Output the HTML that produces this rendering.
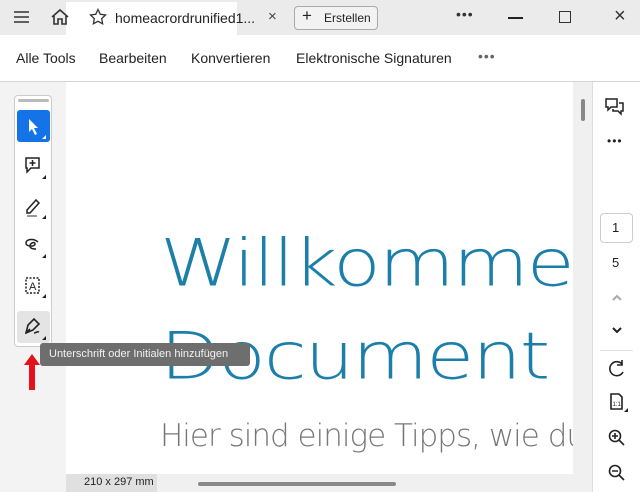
<!DOCTYPE html>
<html><head><meta charset="utf-8"><style>
*{margin:0;padding:0;box-sizing:border-box}
body{width:640px;height:492px;overflow:hidden;position:relative;background:#f3f3f3;font-family:"Liberation Sans",sans-serif;color:#222}
.abs{position:absolute}
.titlebar{left:0;top:0;width:640px;height:35px;background:#ebebeb}
.tab{left:66px;top:2px;width:171px;height:33px;background:#fff}
.toolbar{left:0;top:35px;width:640px;height:47px;background:#fff;border-bottom:1px solid #d4d4d4}
.toolbar span{position:absolute;top:15px;font-size:14px;color:#222}
.page{left:66px;top:82px;width:507px;height:392px;background:#fff;overflow:hidden}
.big{position:absolute;left:94px;font-family:"DejaVu Sans","Liberation Sans",sans-serif;font-weight:200;color:#1b7fa9;font-size:82px;line-height:1;white-space:nowrap;letter-spacing:-2px;transform:scale(0.95,0.79);transform-origin:left top}
.right{left:592px;top:82px;width:48px;height:410px;background:#fff;border-left:1px solid #ddd}
</style></head><body>
<div class="abs titlebar"></div>
<div class="abs tab"></div>
<svg class="abs" style="left:13px;top:9px" width="18" height="16"><path d="M1 3h15M1 8h15M1 13h15" stroke="#333" stroke-width="1.6"/></svg>
<svg class="abs" style="left:50px;top:8px" width="20" height="18"><path d="M2 9L10 2l8 7M4 8v8h4v-5h4v5h4V8" fill="none" stroke="#333" stroke-width="1.6"/></svg>
<svg class="abs" style="left:89px;top:8px" width="18" height="18"><path d="M9 1.5l2.3 4.8 5.2.7-3.8 3.6.9 5.2L9 13.3 4.4 15.8l.9-5.2L1.5 7l5.2-.7z" fill="none" stroke="#333" stroke-width="1.3"/></svg>
<div class="abs" style="left:115px;top:10px;font-size:14px;color:#222">homeacrordrunified1...</div>
<div class="abs" style="left:268px;top:8px;font-size:15px;color:#444">×</div>
<div class="abs" style="left:294px;top:6px;width:84px;height:24px;border:1px solid #a9a9a9;border-radius:4px;background:#f2f2f2"></div>
<div class="abs" style="left:302px;top:6px;font-size:17px;color:#222">+</div>
<div class="abs" style="left:324px;top:11px;font-size:12px;color:#222">Erstellen</div>
<div class="abs" style="left:456px;top:6px;font-size:14px;color:#333;letter-spacing:1px">•••</div>
<div class="abs" style="left:508px;top:17px;width:15px;height:2px;background:#222"></div>
<div class="abs" style="left:559px;top:11px;width:12px;height:12px;border:1.5px solid #333"></div>
<div class="abs" style="left:614px;top:5px;font-size:20px;color:#333">×</div>
<div class="abs toolbar">
<span style="left:16px">Alle Tools</span>
<span style="left:99px">Bearbeiten</span>
<span style="left:191px">Konvertieren</span>
<span style="left:296px">Elektronische Signaturen</span>
<span style="left:478px;top:13px;color:#666;letter-spacing:1px">•••</span>
</div>
<div class="abs page">
<div class="big" style="top:150px">Willkomme</div>
<div class="big" style="top:243px">Document (</div>
<div class="abs" style="left:94px;top:336px;font-size:31px;color:#777;font-family:'DejaVu Sans',sans-serif;font-weight:200;white-space:nowrap;letter-spacing:-1px">Hier sind einige Tipps, wie du</div>
</div>
<div class="abs" style="left:573px;top:82px;width:19px;height:392px;background:#f0f0f0"></div>
<div class="abs" style="left:581px;top:99px;width:4px;height:22px;background:#888;border-radius:2px"></div>
<div class="abs" style="left:66px;top:474px;width:526px;height:18px;background:#f0f0f0"></div>
<div class="abs" style="left:66px;top:474px;width:91px;height:18px;background:#e0e0e0"></div>
<div class="abs" style="left:84px;top:476px;font-size:11px;color:#222">210 x 297 mm</div>
<div class="abs" style="left:198px;top:482px;width:198px;height:4px;background:#888;border-radius:2px"></div>
<div class="abs" style="left:14px;top:95px;width:38px;height:252px;background:#fff;border:1px solid #ccc;border-radius:4px"></div>
<div class="abs" style="left:18px;top:99px;width:31px;height:3px;background:#bbb;border-radius:2px"></div>
<div class="abs" style="left:17px;top:110px;width:33px;height:32px;background:#1473e6;border-radius:3px"></div>
<svg class="abs" style="left:17px;top:110px" width="33" height="32"><path d="M12 9v13l3-3 3 6 2-1-3-6h4z" fill="#fff"/><path d="M29 25v4h-4z" fill="#fff"/></svg>
<svg class="abs" style="left:17px;top:150px" width="33" height="240" fill="none" stroke="#222" stroke-width="1.5">
<path d="M9 8h13v10h-8l-4 4v-4H9z"/><path d="M15.5 10v6M12.5 13h6"/><path d="M29 25v4h-4z" fill="#222" stroke="none"/>
<path d="M10 60l9-10 3 3-9 10H10z"/><path d="M10 66h10" stroke="#999" stroke-width="2"/><path d="M29 65v4h-4z" fill="#222" stroke="none"/>
<path d="M21 92c-4-4-12-3-12 1s9 4 9 1-5-1-5 2 4 3 6 3"/><path d="M29 104v4h-4z" fill="#222" stroke="none"/>
<rect x="9" y="128" width="13" height="15" stroke-dasharray="2 1.5"/><text x="12" y="140" font-size="11" fill="#222" stroke="none" font-family="Liberation Sans">A</text><path d="M29 144v4h-4z" fill="#222" stroke="none"/>
</svg>
<div class="abs" style="left:17px;top:311px;width:33px;height:32px;background:#e4e4e4;border-radius:3px"></div>
<svg class="abs" style="left:17px;top:311px" width="33" height="32" fill="none" stroke="#222" stroke-width="1.6"><path d="M9 22l2-8 6-6 5 5-6 6z"/><path d="M13 18l-4 4M17 22c2 0 3-2 5-1"/><path d="M29 25v4h-4z" fill="#222" stroke="none"/></svg>
<div class="abs" style="left:40px;top:343px;width:210px;height:23px;background:#6e6e6e;border-radius:3px"></div>
<div class="abs" style="left:49px;top:348px;font-size:11px;color:#f2f2f2;white-space:nowrap">Unterschrift oder Initialen hinzufügen</div>
<svg class="abs" style="left:22px;top:352px" width="20" height="40"><path d="M10 2l8 11h-5v25H7V13H2z" fill="#e8101c"/></svg>
<div class="abs right"></div>
<svg class="abs" style="left:604px;top:97px" width="22" height="20" fill="none" stroke="#222" stroke-width="1.5"><path d="M2 2h11v8H7l-3 3v-3H2z"/><path d="M15 6h4v8h-2v3l-3-3H9v-2"/></svg>
<div class="abs" style="left:607px;top:134px;font-size:12px;color:#222;letter-spacing:1px">•••</div>
<div class="abs" style="left:600px;top:213px;width:33px;height:30px;border:1px solid #ccc;border-radius:4px;background:#fff"></div>
<div class="abs" style="left:612px;top:220px;font-size:13px">1</div>
<div class="abs" style="left:612px;top:255px;font-size:13px">5</div>
<svg class="abs" style="left:608px;top:290px" width="18" height="60" fill="none" stroke-width="2"><path d="M5 10l4-4 4 4" stroke="#aaa"/><path d="M5 38l4 4 4-4" stroke="#222"/></svg>
<div class="abs" style="left:600px;top:350px;width:33px;height:1px;background:#e3e3e3"></div>
<svg class="abs" style="left:604px;top:358px" width="26" height="130" fill="none" stroke="#222" stroke-width="1.6">
<path d="M18 6a7 7 0 1 0 1 8M18 2v5h-5"/>
<path d="M7 36h8l3 3v12H7z"/><text x="8.5" y="48" font-size="6" fill="#222" stroke="none" font-family="Liberation Sans">1:1</text><path d="M24 50v4h-4z" fill="#222" stroke="none"/>
<circle cx="11" cy="78" r="5.5"/><path d="M15 82l5 5M8 78h6M11 75v6"/>
<circle cx="11" cy="113" r="5.5"/><path d="M15 117l5 5M8 113h6"/>
</svg>
</body></html>
